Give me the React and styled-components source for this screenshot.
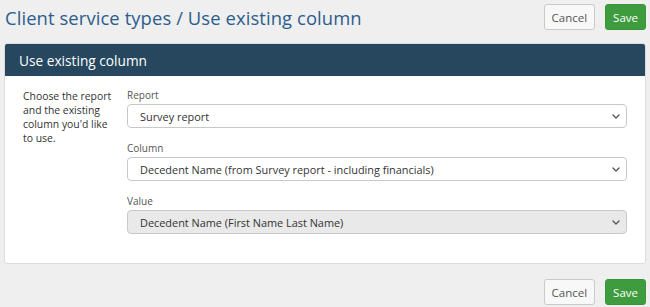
import React from 'react';
import styled, { createGlobalStyle } from 'styled-components';

const GlobalStyle = createGlobalStyle`
  html, body {
    margin: 0;
    padding: 0;
    background: #efefef;
    font-family: 'Open Sans', 'Liberation Sans', sans-serif;
    color: #333;
  }
`;

const chevron = encodeURIComponent(
  '<svg xmlns="http://www.w3.org/2000/svg" width="8" height="5" viewBox="0 0 8 5"><path d="M1 1 4 4 7 1" fill="none" stroke="#555" stroke-width="1.3" stroke-linecap="round" stroke-linejoin="round"/></svg>'
);

const Page = styled.div`
  padding: 4px 4px 5px 4px;
`;

const TopBar = styled.header`
  display: flex;
  align-items: center;
  justify-content: space-between;
  height: 26px;
  margin-bottom: 13px;
`;

const Title = styled.h1`
  margin: 0 0 0 1px;
  font-size: 18.4px;
  font-weight: 400;
  letter-spacing: 0.1px;
  color: #2b5d8e;
`;

const Actions = styled.div`
  display: flex;
  justify-content: flex-end;
  gap: 10px;
  margin-top: ${(props) => (props.$bottom ? '15px' : '0')};
`;

const Button = styled.button`
  height: 26px;
  padding: 0 7px;
  font-family: inherit;
  font-size: 11.5px;
  border-radius: 3px;
  cursor: pointer;
  border: 1px solid ${(props) => (props.$primary ? '#3a953a' : '#c9c9c9')};
  background: ${(props) => (props.$primary ? '#3e9c3e' : '#f8f8f8')};
  color: ${(props) => (props.$primary ? '#fff' : '#555')};
`;

const Panel = styled.section`
  background: #fff;
  border: 1px solid #dcdcdc;
  border-radius: 3px;
  overflow: hidden;
`;

const PanelHeader = styled.div`
  height: 32px;
  display: flex;
  align-items: center;
  padding-left: 14px;
  background: #26475d;
  color: #fff;
  font-size: 13.7px;
`;

const PanelBody = styled.div`
  display: grid;
  grid-template-columns: 104px 1fr;
  padding: 12px 18px 29px 18px;
`;

const Help = styled.p`
  margin: 1px 0 0 0;
  width: 90px;
  font-size: 10.4px;
  line-height: 14px;
  color: #333;
`;

const Fields = styled.div`
  display: flex;
  flex-direction: column;
  gap: 13px;
`;

const Field = styled.div`
  display: flex;
  flex-direction: column;
`;

const Label = styled.label`
  font-size: 10px;
  line-height: 14px;
  margin-bottom: 2px;
  color: #555;
`;

const Select = styled.select`
  appearance: none;
  -webkit-appearance: none;
  height: 24px;
  padding: 0 24px 0 12px;
  font-family: inherit;
  font-size: 10.9px;
  color: #333;
  border: 1px solid #c8c8c8;
  border-radius: 4px;
  background-color: ${(props) => (props.disabled ? '#e9e9e9' : '#fff')};
  background-image: url("data:image/svg+xml,${chevron}");
  background-repeat: no-repeat;
  background-position: right 6px center;
  opacity: 1;
`;

export default function App() {
  return (
    <>
      <GlobalStyle />
      <Page>
        <TopBar>
          <Title>Client service types / Use existing column</Title>
          <Actions>
            <Button>Cancel</Button>
            <Button $primary>Save</Button>
          </Actions>
        </TopBar>
        <Panel>
          <PanelHeader>Use existing column</PanelHeader>
          <PanelBody>
            <Help>Choose the report and the existing column you'd like to use.</Help>
            <Fields>
              <Field>
                <Label>Report</Label>
                <Select defaultValue="survey">
                  <option value="survey">Survey report</option>
                </Select>
              </Field>
              <Field>
                <Label>Column</Label>
                <Select defaultValue="decedent">
                  <option value="decedent">
                    Decedent Name (from Survey report - including financials)
                  </option>
                </Select>
              </Field>
              <Field>
                <Label>Value</Label>
                <Select disabled defaultValue="full">
                  <option value="full">Decedent Name (First Name Last Name)</option>
                </Select>
              </Field>
            </Fields>
          </PanelBody>
        </Panel>
        <Actions $bottom>
          <Button>Cancel</Button>
          <Button $primary>Save</Button>
        </Actions>
      </Page>
    </>
  );
}
